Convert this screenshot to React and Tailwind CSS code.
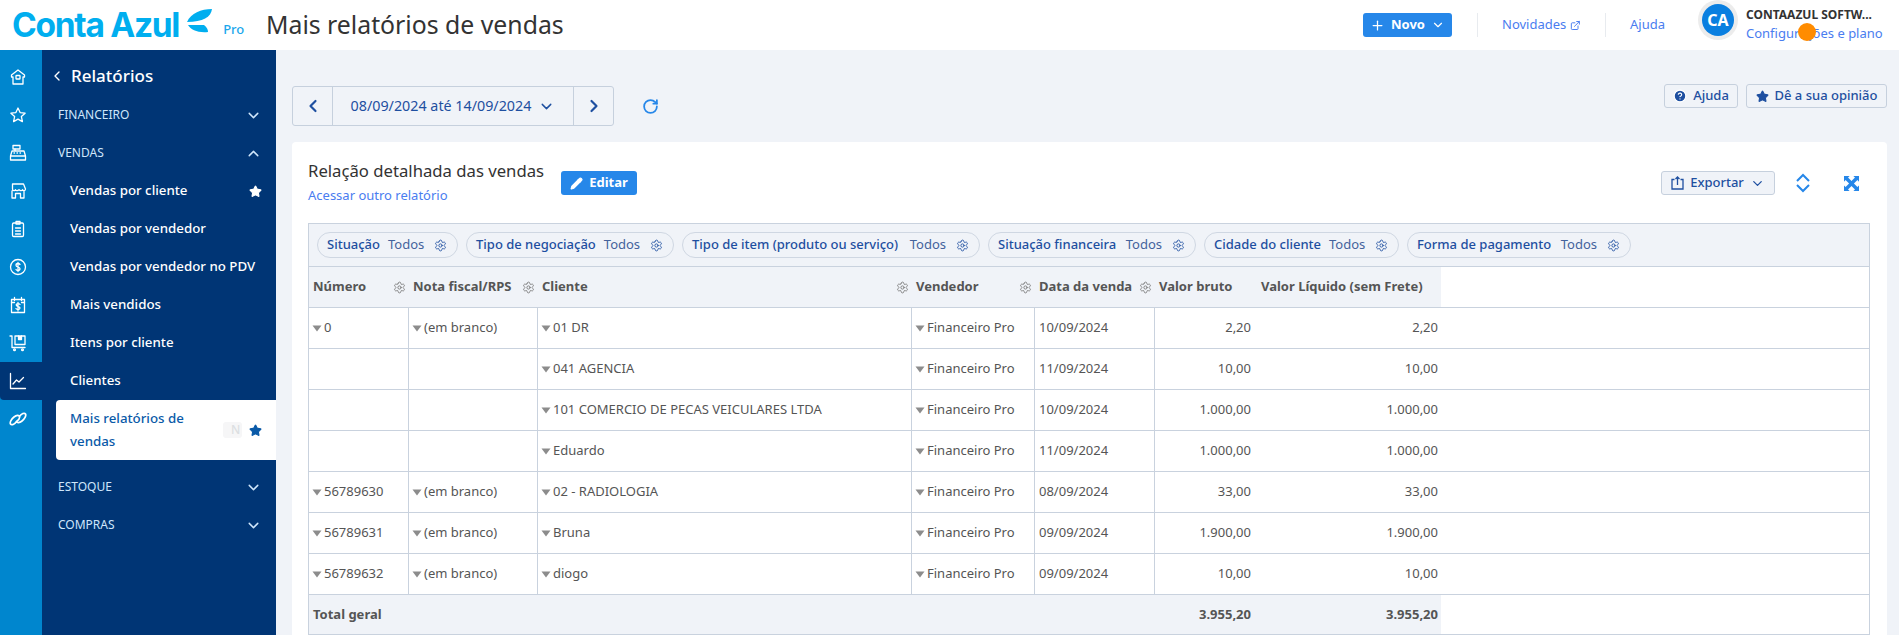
import React from 'react';
import { ChevronDown, ChevronUp, ChevronLeft, ChevronRight, Plus, ExternalLink, RotateCw, Pencil, Star, CircleHelp, Settings } from 'lucide-react';

const navItems = ['Vendas por cliente', 'Vendas por vendedor', 'Vendas por vendedor no PDV', 'Mais vendidos', 'Itens por cliente', 'Clientes'];

const chips = [
  ['Situação', 141],
  ['Tipo de negociação', 208],
  ['Tipo de item (produto ou serviço)', 298],
  ['Situação financeira', 208],
  ['Cidade do cliente', 195],
  ['Forma de pagamento', 224],
];

const columns = [
  { label: 'Número', w: 100, gear: true },
  { label: 'Nota fiscal/RPS', w: 129, gear: true },
  { label: 'Cliente', w: 374, gear: true },
  { label: 'Vendedor', w: 123, gear: true },
  { label: 'Data da venda', w: 120, gear: true },
  { label: 'Valor bruto', w: 102 },
  { label: 'Valor Líquido (sem Frete)', w: 184 },
];

const rows = [
  ['0', '(em branco)', '01 DR', '10/09/2024', '2,20'],
  ['', '', '041 AGENCIA', '11/09/2024', '10,00'],
  ['', '', '101 COMERCIO DE PECAS VEICULARES LTDA', '10/09/2024', '1.000,00'],
  ['', '', 'Eduardo', '11/09/2024', '1.000,00'],
  ['56789630', '(em branco)', '02 - RADIOLOGIA', '08/09/2024', '33,00'],
  ['56789631', '(em branco)', 'Bruna', '09/09/2024', '1.900,00'],
  ['56789632', '(em branco)', 'diogo', '09/09/2024', '10,00'],
];

function Rail({ children, active }) {
  return (
    <div className={`h-[38px] flex items-center pl-[9px] ${active ? 'bg-[#003575] rounded-bl-[4px] w-[42px]' : ''}`}>
      <svg width="18" height="18" viewBox="0 0 18 18" fill="none" stroke="white" strokeWidth="1.3" strokeLinecap="round" strokeLinejoin="round">
        {children}
      </svg>
    </div>
  );
}

function Gear({ className }) {
  return <Settings className={className} size={13} strokeWidth={1.6} />;
}

function Tri({ text }) {
  if (!text) return null;
  return (
    <span className="flex items-center gap-[2px]">
      <svg width="10" height="7" viewBox="0 0 10 7" className="shrink-0"><path d="M0.5 0.5h9L5 6.500z" fill="#8c8c8c" /></svg>
      <span className="whitespace-nowrap">{text}</span>
    </span>
  );
}

export default function App() {
  return (
    <div className="w-[1899px] h-[635px] overflow-hidden flex flex-col bg-[#f0f3f8] text-[13px] font-['Noto_Sans',sans-serif] text-[#555]">
      <header className="h-[50px] shrink-0 bg-white flex items-center relative">
        <div className="flex items-start w-[266px] pl-[12px]">
          <span className="font-['Inter',sans-serif] font-bold text-[33.500px] leading-[50px] tracking-[-1.300px] text-[#00aeef] whitespace-nowrap">Conta Azul</span>
          <svg width="26" height="24" viewBox="0 0 26 24" className="mt-[9px] ml-[8px] shrink-0">
            <path d="M0 13C4 4 14 0 25 0 24 8 16 13 0 13Z" fill="#00aeef" />
            <path d="M1 16H17C20 18 21 21 21 23 11 24 4 21 1 16Z" fill="#00aeef" />
          </svg>
          <span className="mt-[20px] ml-[10px] text-[13px] font-medium text-[#1aa7ec]">Pro</span>
        </div>
        <h1 className="text-[24.800px] text-[#333] whitespace-nowrap">Mais relatórios de vendas</h1>
        <div className="ml-auto flex items-center">
          <button className="w-[89px] h-[24px] rounded-[3px] bg-[#2687e9] text-white text-[13px] font-bold flex items-center justify-center gap-[6px]">
            <Plus size={15} />
            Novo
            <ChevronDown size={14} />
          </button>
          <div className="w-px h-[24px] bg-[#e8ebef] ml-[25px]" />
          <a className="ml-[24px] text-[#4a7df0] flex items-center gap-[4px] w-[79px] whitespace-nowrap">Novidades <ExternalLink size={13} strokeWidth={2.2} /></a>
          <div className="w-px h-[24px] bg-[#e8ebef] ml-[24px]" />
          <a className="ml-[24px] text-[#4a7df0]">Ajuda</a>
          <div className="ml-[33px] w-[40px] h-[40px] rounded-full bg-[#ececec] flex items-center justify-center -mt-[10px]">
            <div className="w-[32px] h-[32px] rounded-full bg-[#0a7fe0] text-white text-[16px] font-bold flex items-center justify-center">CA</div>
          </div>
          <div className="ml-[8px] w-[153px]">
            <div className="font-bold text-[12px] text-[#333] whitespace-nowrap">CONTAAZUL SOFTW...</div>
            <div className="text-[#4a7df0] whitespace-nowrap">Configurações e plano</div>
          </div>
        </div>
        <div className="absolute left-[1798px] top-[23px] w-[18px] h-[18px] rounded-full bg-[#ff8c00]" />
      </header>

      <div className="flex-1 flex min-h-0">
        <aside className="w-[42px] shrink-0 bg-[#0086ce] pt-[8px]">
          <Rail><path d="M9 2 2.500 7v2h1.500v7h10V9h1.500V7z" /><rect x="7" y="7.500" width="4" height="3.500" rx=".6" /></Rail>
          <Rail><path d="M9 2l2.100 4.600 5 .6-3.700 3.400 1 5L9 13.100l-4.400 2.500 1-5L1.900 7.200l5-.6z" /></Rail>
          <Rail><rect x="4" y="1.500" width="7" height="3.500" /><path d="M6 5v2M3 7h12l1.500 5H1.500zM1.500 12v4h15v-4M5 9h.5M8 9h.5M11 9h.5" /></Rail>
          <Rail><path d="M3.500 2h11l2 5c0 2-2.500 2-3 .7-.5 1.300-2.500 1.300-3.500 0-1 1.300-3 1.300-3.500 0-.5 1.300-3 1.300-3-.7zM3 9v7h3.500v-4.500h5V16H15V9" /></Rail>
          <Rail><rect x="3.500" y="3" width="11" height="13.500" rx="1.200" /><rect x="7" y="1.500" width="4" height="2.500" /><path d="M6.500 8h5M6.500 11h5M6.500 14h5" /></Rail>
          <Rail><circle cx="9" cy="9" r="7.500" /><path d="M11 6.500C10.500 5.800 9.800 5.500 9 5.500c-1.200 0-2 .7-2 1.700C7 9.500 11 8.500 11 10.800c0 1-.9 1.700-2 1.700-.9 0-1.600-.3-2-1M9 4.500v9" /></Rail>
          <Rail><rect x="2.500" y="3.500" width="13" height="13" /><path d="M5.500 1.500v3M12.500 1.500v3M2.500 6.500h3M12.500 6.500h3M11 8.500c-.4-.6-1.100-.9-2-.9-1.100 0-1.800.6-1.800 1.400 0 2 3.800 1.100 3.800 3 0 .9-.8 1.500-2 1.500-.8 0-1.500-.3-2-.9M9 6.500v8.500" /></Rail>
          <Rail><path d="M1 2h2v11.500h13" /><rect x="6" y="2" width="10" height="8.500" /><path d="M9.500 2v3.500h3V2" fill="white" /><circle cx="5.500" cy="15.800" r=".9" /><circle cx="13.500" cy="15.800" r=".9" /></Rail>
          <Rail active><path d="M1.500 1.500v15h15" /><path d="M4 12l3.500-4 2.500 2 4.500-4.500" /></Rail>
          <Rail><path d="M7.500 11.500c-2 3-5 4-6 2.500-1-1.500 1-5 3.500-7 2.500-2 5-2 5.500-.5.500 1.500-1 3.500-3 5M10.500 6.500c2-3 5-4 6-2.500 1 1.500-1 5-3.500 7-2.500 2-5 2-5.500.5" strokeWidth="1.700" /></Rail>
        </aside>

        <nav className="w-[234px] shrink-0 bg-[#003575] text-white">
          <div className="h-[46px] pt-[6px] flex items-center pl-[7px] gap-[6px]">
            <ChevronLeft size={16} />
            <span className="text-[17px] font-medium">Relatórios</span>
          </div>
          <div className="h-[38px] pl-[16px] pr-[14px] flex items-center justify-between text-[12px] text-[#cfe6fb]">
            FINANCEIRO <ChevronDown size={17} />
          </div>
          <div className="h-[38px] pl-[16px] pr-[14px] flex items-center justify-between text-[12px] text-[#cfe6fb]">
            VENDAS <ChevronUp size={17} />
          </div>
          {navItems.map((item, idx) => (
            <div key={item} className="h-[38px] pl-[28px] pr-[14px] flex items-center justify-between font-medium text-[13.300px] whitespace-nowrap">
              {item}
              {idx === 0 && <Star size={13} fill="white" />}
            </div>
          ))}
          <div className="ml-[14px] h-[60px] bg-white rounded-l-[4px] pl-[14px] pr-[14px] flex items-center justify-between text-[#0a5aa8] font-medium text-[13.300px]">
            <span className="leading-[23px] w-[130px]">Mais relatórios de vendas</span>
            <span className="flex items-center gap-[7px]">
              <span className="w-[19px] h-[16px] overflow-hidden rounded-[3px] bg-[#f6f6f7] text-[#dcdfe2] text-[12px] leading-[16px] pl-[8px]">N</span>
              <Star size={13} fill="#0a5aa8" />
            </span>
          </div>
          <div className="h-[8px]" />
          <div className="h-[38px] pl-[16px] pr-[14px] flex items-center justify-between text-[12px] text-[#cfe6fb]">
            ESTOQUE <ChevronDown size={17} />
          </div>
          <div className="h-[38px] pl-[16px] pr-[14px] flex items-center justify-between text-[12px] text-[#cfe6fb]">
            COMPRAS <ChevronDown size={17} />
          </div>
        </nav>

        <main className="flex-1 min-w-0 pl-[16px] pr-[12px] pt-[34px]">
          <div className="flex items-start justify-between h-[58px]">
            <div className="flex items-center mt-[2px]">
              <div className="h-[40px] flex rounded-[3px] border border-[#c6d0dd] text-[#1e4fa0]">
                <div className="w-[40px] border-r border-[#c6d0dd] flex items-center justify-center"><ChevronLeft size={20} strokeWidth={2.600} /></div>
                <div className="w-[241px] border-r border-[#c6d0dd] flex items-center justify-center gap-[7px] text-[14.300px]">08/09/2024 até 14/09/2024 <ChevronDown size={17} /></div>
                <div className="w-[39px] flex items-center justify-center"><ChevronRight size={20} strokeWidth={2.600} /></div>
              </div>
              <RotateCw size={17} strokeWidth={2.500} className="ml-[28px] text-[#2687e9]" />
            </div>
            <div className="flex gap-[8px] text-[#1e4fa0] font-medium">
              <button className="w-[74px] h-[24px] rounded-[3px] border border-[#c6d0dd] flex items-center justify-center gap-[6px]"><CircleHelp size={14} fill="#1e4fa0" stroke="white" /> Ajuda</button>
              <button className="w-[141px] h-[24px] rounded-[3px] border border-[#c6d0dd] flex items-center justify-center gap-[6px]"><Star size={13} fill="#1e4fa0" /> Dê a sua opinião</button>
            </div>
          </div>

          <section className="h-[493px] bg-white rounded-t-[4px] px-[16px]">
            <div className="h-[81px] flex items-start">
              <div className="pt-[18px] w-[237px]">
                <h2 className="text-[16.700px] leading-[22px] text-[#333] whitespace-nowrap">Relação detalhada das vendas</h2>
                <a className="block mt-[4px] text-[#4a7df0] text-[13px] whitespace-nowrap">Acessar outro relatório</a>
              </div>
              <button className="ml-[16px] mt-[29px] w-[76px] h-[24px] rounded-[3px] bg-[#2687e9] text-white font-bold flex items-center justify-center gap-[6px]"><Pencil size={13} fill="white" /> Editar</button>
              <div className="ml-auto mt-[29px] flex items-center text-[#2687e9]">
                <button className="w-[114px] h-[24px] rounded-[3px] border border-[#c6d0dd] bg-[#f0f3f8] text-[#1e4fa0] font-medium flex items-center justify-center gap-[6px]">
                  <svg width="13" height="14" viewBox="0 0 13 14" fill="none" stroke="#1e4fa0" strokeWidth="1.300"><path d="M3.500 3.500H1v9.500h11V3.500H9.500M6.500 9V1M4.500 3l2-2 2 2" /></svg>
                  Exportar <ChevronDown size={15} />
                </button>
                <svg width="16" height="20" viewBox="0 0 16 20" fill="none" stroke="#2687e9" strokeWidth="2" className="ml-[20px]"><path d="M2 8l6-6 6 6M2 12l6 6 6-6" /></svg>
                <svg width="15" height="15" viewBox="0 0 16 16" fill="#2687e9" className="ml-[33px]">
                  <path d="M0 0h6L4.300 1.700 8 5.400 11.700 1.700 10 0h6v6l-1.700-1.700L10.600 8l3.700 3.700L16 10v6h-6l1.700-1.700L8 10.600l-3.700 3.700L6 16H0v-6l1.700 1.700L5.400 8 1.700 4.300 0 6z" />
                </svg>
                <div className="w-[12px]" />
              </div>
            </div>

            <div className="w-[1562px] h-[412px] border border-[#c9d2de] border-b-0 flex flex-col">
              <div className="h-[43px] shrink-0 bg-[#f0f3f8] border-b border-[#c9d2de] flex items-center gap-[8px] pl-[8px]">
                {chips.map(([name, w]) => (
                  <div key={name} style={{ width: w }} className="h-[26px] rounded-full border border-[#cfd7e2] flex items-center justify-between pl-[9px] pr-[10px] text-[#1e4fa0] whitespace-nowrap">
                    <span className="font-medium">{name}</span>
                    <span className="flex items-center gap-[10px] ml-auto text-[#44639c]">
                      <span className="ml-[8px]">Todos</span>
                      <Gear className="text-[#1e4fa0]" />
                    </span>
                  </div>
                ))}
              </div>
              <table className="table-fixed border-separate border-spacing-0 w-full">
                <colgroup>
                  {columns.map(c => <col key={c.label} style={{ width: c.w }} />)}
                  <col />
                </colgroup>
                <thead>
                  <tr className="h-[41px]">
                    {columns.map(c => (
                      <th key={c.label} className="bg-[#f0f3f8] border-b border-[#c9d2de] pl-[4px] pr-[3px] font-bold text-left text-[#555] whitespace-nowrap">
                        <div className="flex items-center justify-between">
                          {c.label}
                          {c.gear && <Gear className="text-[#777] shrink-0" />}
                        </div>
                      </th>
                    ))}
                    <th className="border-b border-[#c9d2de]" />
                  </tr>
                </thead>
                <tbody>
                  {rows.map((r, idx) => (
                    <tr key={idx} className="h-[41px]">
                      <td className="border-b border-r border-[#c9d2de] pl-[3px] pr-[4px]"><Tri text={r[0]} /></td>
                      <td className="border-b border-r border-[#c9d2de] pl-[3px] pr-[4px]"><Tri text={r[1]} /></td>
                      <td className="border-b border-r border-[#c9d2de] pl-[3px] pr-[4px]"><Tri text={r[2]} /></td>
                      <td className="border-b border-r border-[#c9d2de] pl-[3px] pr-[4px]"><Tri text="Financeiro Pro" /></td>
                      <td className="border-b border-r border-[#c9d2de] px-[4px]">{r[3]}</td>
                      <td className="border-b border-[#c9d2de] pr-[6px] text-right">{r[4]}</td>
                      <td className="border-b border-[#c9d2de] pr-[3px] text-right">{r[4]}</td>
                      <td className="border-b border-[#c9d2de]" />
                    </tr>
                  ))}
                  <tr className="h-[40px] font-bold">
                    <td colSpan={5} className="bg-[#f0f3f8] border-b border-[#c9d2de] px-[4px]">Total geral</td>
                    <td className="bg-[#f0f3f8] border-b border-[#c9d2de] pr-[6px] text-right">3.955,20</td>
                    <td className="bg-[#f0f3f8] border-b border-[#c9d2de] pr-[3px] text-right">3.955,20</td>
                    <td className="border-b border-[#c9d2de]" />
                  </tr>
                </tbody>
              </table>
            </div>
          </section>
        </main>
      </div>
    </div>
  );
}
